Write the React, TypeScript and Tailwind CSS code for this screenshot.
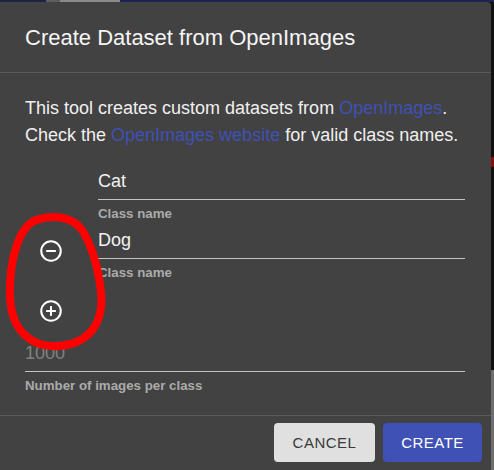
import React from "react";

function CircleIcon({ plus }: { plus?: boolean }) {
  return (
    <svg width="26" height="26" viewBox="0 0 24 24" fill="none">
      <circle cx="12" cy="12" r="9" stroke="white" strokeWidth="1.9" />
      <line x1="7.5" y1="12" x2="16.5" y2="12" stroke="white" strokeWidth="1.9" />
      {plus && <line x1="12" y1="7.5" x2="12" y2="16.5" stroke="white" strokeWidth="1.9" />}
    </svg>
  );
}

function Field({ value, label, muted }: { value: string; label: string; muted?: boolean }) {
  return (
    <div className="flex flex-col">
      <div
        className={`h-[33px] pb-[3px] leading-[29px] text-[18px] border-b border-[#c4c4c4] ${
          muted ? "text-[#808080]" : "text-[#f2f2f2]"
        }`}
      >
        {value}
      </div>
      <div className="mt-[6px] h-[16px] leading-[16px] text-[13.3px] font-bold text-[#ababab]">{label}</div>
    </div>
  );
}

export default function App() {
  return (
    <div
      className="w-[494px] h-[470px] overflow-hidden bg-[#141414] flex flex-col relative"
      style={{ fontFamily: '"Liberation Sans", Arial, sans-serif' }}
    >
      <div className="h-[2px] flex shrink-0">
        <div className="w-[46px] bg-[#1b2447]" />
        <div className="w-[14px] bg-[#5e5e5e]" />
        <div className="w-[60px] bg-[#8a8a8a]" />
        <div className="flex-1 bg-[#1d2250]" />
      </div>
      <div className="flex flex-1">
        <div className="w-[491px] bg-[#424242] rounded-tr-[4px] flex flex-col">
          <div className="h-[70px] flex items-center px-[25px] text-[22px] text-[#f5f5f5]">
            Create Dataset from OpenImages
          </div>
          <div className="h-px bg-[#5a5a5a]" />
          <div className="px-[25px] pt-[22px] pr-[26px] flex flex-col">
            <p className="text-[18px] leading-[26.7px] text-[#f0f0f0] whitespace-nowrap">
              This tool creates custom datasets from <span className="text-[#3f51b5]">OpenImages</span>.
              <br />
              Check the <span className="text-[#3f51b5]">OpenImages website</span> for valid class names.
            </p>
            <div className="flex mt-[19px]">
              <div className="w-[73px] flex flex-col pt-[60px] pl-[2px]">
                <div className="w-[48px] h-[48px] flex items-center justify-center">
                  <CircleIcon />
                </div>
                <div className="w-[48px] h-[48px] mt-[12px] flex items-center justify-center">
                  <CircleIcon plus />
                </div>
              </div>
              <div className="flex-1 flex flex-col gap-[4px]">
                <Field value="Cat" label="Class name" />
                <Field value="Dog" label="Class name" />
              </div>
            </div>
            <div className="mt-[4px]">
              <Field value="1000" label="Number of images per class" muted />
            </div>
          </div>
          <div className="mt-[21px] h-px bg-[#5a5a5a]" />
          <div className="flex justify-end gap-[8px] pt-[7px] pr-[9px]">
            <button className="w-[101px] h-[39px] rounded-[4px] bg-[#e0e0e0] text-[#3a3a3a] text-[15px] tracking-[0.5px]">
              CANCEL
            </button>
            <button className="w-[99px] h-[39px] rounded-[4px] bg-[#3f51b5] text-white text-[15px] tracking-[0.5px]">
              CREATE
            </button>
          </div>
        </div>
        <div className="w-[3px] flex flex-col">
          <div className="h-[155px] bg-[#111111]" />
          <div className="h-[10px] bg-[#8a0d0d]" />
          <div className="h-[203px] bg-[#111111]" />
          <div className="flex-1 bg-[#6e6e6e]" />
        </div>
      </div>
      <svg className="absolute left-0 top-0 pointer-events-none" width="494" height="470">
        <path
          d="M 40 219 C 20 222 9 258 10 296 C 11 331 32 348 58 346 C 90 344 104 322 101 292 C 98 266 92 246 82 230 C 72 216 52 215 40 219 Z"
          fill="none"
          stroke="#ff0000"
          strokeWidth="8"
          strokeLinejoin="round"
        />
      </svg>
    </div>
  );
}
